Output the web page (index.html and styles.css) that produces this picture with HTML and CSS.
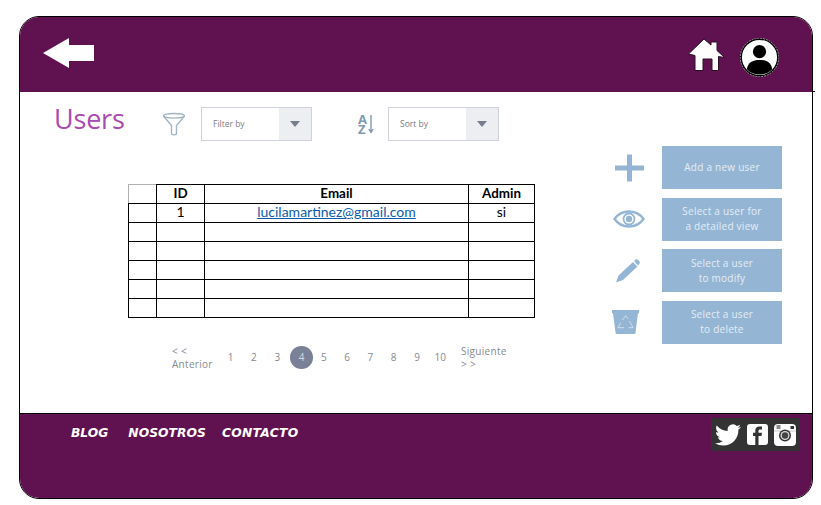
FILE: index.html
```html
<!DOCTYPE html>
<html lang="en">
<head>
    <meta charset="UTF-8">
    <meta name="viewport" content="width=device-width, initial-scale=1.0">
    <title>Users</title>
    <link rel="stylesheet" href="styles.css">
</head>
<body>
    <div class="frame">
        <header class="top-bar">
            <svg class="back-icon" viewBox="0 0 51 30"><path d="M0 15 26 0V7H51V23H26V30Z"/></svg>
            <div class="top-icons">
                <svg class="home-icon" viewBox="0 0 38 34">
                    <path d="M16 1 23 7V4H29V12.500L36.500 19.500 30.500 18.500V32.500H24V21H15V32.500H7V17.500L.5 16Z" fill="#fff" stroke="#2a1024" stroke-width="1"/>
                </svg>
                <svg class="user-icon" viewBox="0 0 40 40">
                    <circle cx="20" cy="20" r="19" fill="#fff" stroke="#000" stroke-width="2"/>
                    <circle cx="20" cy="20" r="19.700" fill="none" stroke="#fff" stroke-width=".6" stroke-dasharray="2 1"/>
                    <circle cx="20" cy="14" r="6.800"/>
                    <path d="M7 32C8 25 13 22.500 20 22.500S32 25 33 32C30 35.500 25 37.500 20 37.500S10 35.500 7 32Z"/>
                </svg>
            </div>
        </header>

        <main class="content">
            <div class="left-col">
                <div class="toolbar">
                    <h1 class="page-title">Users</h1>
                    <svg class="funnel-icon" viewBox="0 0 24 24" fill="none" stroke="#9fb4c4" stroke-width="1.300">
                        <ellipse cx="12" cy="3.800" rx="10.500" ry="2.300"/>
                        <path d="M1.500 4 9.500 13.500V21C9.500 23.500 14.500 23.500 14.500 21V13.500L22.500 4"/>
                    </svg>
                    <div class="select-box">
                        <span class="select-label">Filter by</span>
                        <span class="select-arrow"><i class="arrow-down"></i></span>
                    </div>
                    <div class="az-icon">
                        <span class="az-letters">A<br>Z</span>
                        <svg class="az-arrow" viewBox="0 0 6 20" fill="none" stroke="#7f9ab3" stroke-width="1.400">
                            <path d="M3 1V18M.8 15 3 18.500 5.200 15"/>
                        </svg>
                    </div>
                    <div class="select-box">
                        <span class="select-label">Sort by</span>
                        <span class="select-arrow"><i class="arrow-down"></i></span>
                    </div>
                </div>

                <table class="users-table">
                    <tr>
                        <th class="corner"></th>
                        <th class="col-id">ID</th>
                        <th class="col-email">Email</th>
                        <th class="col-admin">Admin</th>
                    </tr>
                    <tr>
                        <td></td>
                        <td>1</td>
                        <td><a href="#">lucilamartinez@gmail.com</a></td>
                        <td>si</td>
                    </tr>
                    <tr><td></td><td></td><td></td><td></td></tr>
                    <tr><td></td><td></td><td></td><td></td></tr>
                    <tr><td></td><td></td><td></td><td></td></tr>
                    <tr><td></td><td></td><td></td><td></td></tr>
                    <tr><td></td><td></td><td></td><td></td></tr>
                </table>

                <nav class="pager">
                    <span class="pager-edge">&lt; &lt;<br>Anterior</span>
                    <span class="pager-num">1</span>
                    <span class="pager-num">2</span>
                    <span class="pager-num">3</span>
                    <span class="pager-num active">4</span>
                    <span class="pager-num">5</span>
                    <span class="pager-num">6</span>
                    <span class="pager-num">7</span>
                    <span class="pager-num">8</span>
                    <span class="pager-num">9</span>
                    <span class="pager-num">10</span>
                    <span class="pager-edge next">Siguiente<br>&gt; &gt;</span>
                </nav>
            </div>

            <div class="actions">
                <div class="action-row">
                    <svg class="action-icon" viewBox="0 0 36 30"><path d="M16 1.500H21V12.500H33V17.500H21V28.500H16V17.500H4V12.500H16Z"/></svg>
                    <div class="action-btn">Add a new user</div>
                </div>
                <div class="action-row">
                    <svg class="action-icon" viewBox="0 0 36 30">
                        <path d="M3.500 15C7 10 12 7.500 18 7.500S29 10 32.500 15C29 20 24 22.500 18 22.500S7 20 3.500 15Z" fill="none" stroke="#94b6d4" stroke-width="2.400"/>
                        <circle cx="18" cy="15" r="5.500" fill="none" stroke="#94b6d4" stroke-width="1.800"/>
                        <circle cx="18" cy="15" r="3.200"/>
                    </svg>
                    <div class="action-btn">Select a user for<br>a detailed view</div>
                </div>
                <div class="action-row">
                    <svg class="action-icon" viewBox="0 0 36 30">
                        <path d="M5 26.500 7.500 19.500 22 6 26.500 10.500 12 24ZM23 5 24.500 3.500C25.500 3 26 3 27 3.800L28.500 5.500C29 6.500 29 7 28.300 8L27 9.500Z"/>
                    </svg>
                    <div class="action-btn">Select a user<br>to modify</div>
                </div>
                <div class="action-row">
                    <svg class="action-icon" viewBox="0 0 36 30">
                        <path d="M1 3H28V6L27 6.500 24.500 25.500C24.300 26.700 23.700 27 23 27H6C5.300 27 4.700 26.700 4.500 25.500L2 6.500 1 6Z"/>
                        <path d="M11.500 13 14.700 8.700 17 12M18.500 14 22 20.700H17.500M13 20.700H7L9.800 15.500" fill="none" stroke="#dbe7f1" stroke-width=".8"/>
                    </svg>
                    <div class="action-btn">Select a user<br>to delete</div>
                </div>
            </div>
        </main>

        <footer class="bottom-bar">
            <nav class="footer-links">
                <a href="#" class="link-blog">BLOG</a>
                <a href="#" class="link-us">NOSOTROS</a>
                <a href="#">CONTACTO</a>
            </nav>
            <div class="social">
                <svg class="bird" viewBox="0 0 24 24"><path d="M23.953 4.570a10 10 0 01-2.825.775 4.958 4.958 0 002.163-2.723c-.951.555-2.005.959-3.127 1.184a4.920 4.920 0 00-8.384 4.482C7.690 8.095 4.067 6.130 1.640 3.162a4.822 4.822 0 00-.666 2.475c0 1.710.870 3.213 2.188 4.096a4.904 4.904 0 01-2.228-.616v.060a4.923 4.923 0 003.946 4.827 4.996 4.996 0 01-2.212.085 4.936 4.936 0 004.604 3.417 9.867 9.867 0 01-6.102 2.105c-.390 0-.779-.023-1.170-.067a13.995 13.995 0 007.557 2.209c9.053 0 13.998-7.496 13.998-13.985 0-.210 0-.420-.015-.630A9.935 9.935 0 0024 4.590z"/></svg>
                <svg class="social-tile" viewBox="0 0 21 21">
                    <rect width="21" height="21" rx="3" fill="#fff"/>
                    <path d="M11.500 21V12H14.500L15 8.800H11.500V7C11.500 6 12 5.500 13 5.500H15V2.500H12.500C9.500 2.500 8.300 4.200 8.300 6.500V8.800H6V12H8.300V21Z" fill="#333"/>
                </svg>
                <svg class="social-tile insta" viewBox="0 0 22 22">
                    <rect width="22" height="22" rx="4" fill="#fff"/>
                    <rect x="2.500" y="1" width="4" height="4" fill="#8a8a8a"/>
                    <rect x="16.500" y="2" width="3.500" height="3" fill="#333"/>
                    <path d="M0 7H22" stroke="#ccc" stroke-width="1"/>
                    <circle cx="11" cy="11.500" r="6" fill="#333"/>
                    <circle cx="11" cy="11.500" r="4.500" fill="#ddd"/>
                    <circle cx="11" cy="11.500" r="3.200" fill="#444"/>
                </svg>
            </div>
        </footer>
    </div>
</body>
</html>
```

FILE: styles.css
```css
body {
    margin: 0;
    background-color: white;
    font-family: "Open Sans", sans-serif;
}
.frame {
    box-sizing: border-box;
    width: 794px;
    height: 483px;
    margin: 16px 0 0 19px;
    border: 1px solid black;
    border-radius: 20px;
    display: flex;
    flex-direction: column;
}

/* top bar */
.top-bar {
    position: relative;
    height: 75px;
    flex: none;
    background-color: #5f124f;
    border-radius: 19px 19px 0 0;
    display: flex;
    align-items: center;
    justify-content: space-between;
    padding: 0 33px 0 23px;
}
.top-bar::after {
    content: "";
    position: absolute;
    right: -3px;
    bottom: 0;
    width: 3px;
    height: 1px;
    background-color: black;
}
.back-icon {
    width: 51px;
    height: 30px;
    fill: white;
    margin-bottom: 4px;
}
.top-icons {
    display: flex;
    align-items: center;
    gap: 14px;
}
.home-icon {
    width: 38px;
    height: 34px;
}
.user-icon {
    width: 39px;
    height: 39px;
    margin-top: 6px;
}

/* middle */
.content {
    flex: 1;
    display: flex;
    justify-content: space-between;
    background-color: white;
}
.left-col {
    padding: 15px 0 0 34px;
}
.toolbar {
    display: flex;
    align-items: center;
    height: 34px;
}
.page-title {
    margin: 0 37px 11px 0;
    width: 71px;
    font-family: "Open Sans", sans-serif;
    font-size: 27px;
    font-weight: 400;
    letter-spacing: -.2px;
    color: #ab4ab3;
}
.funnel-icon {
    width: 24px;
    height: 24px;
    margin: 0 15px 0 0;
}
.select-box {
    box-sizing: border-box;
    width: 111px;
    height: 34px;
    border: 1px solid #cfd3d9;
    display: flex;
    align-items: stretch;
}
.select-label {
    flex: 1;
    padding-left: 11px;
    font-size: 8.500px;
    line-height: 32px;
    color: #777c84;
}
.select-arrow {
    width: 32px;
    background-color: #eceef2;
    display: flex;
    align-items: center;
    justify-content: center;
}
.arrow-down {
    border-left: 5.500px solid transparent;
    border-right: 5.500px solid transparent;
    border-top: 6px solid #767e8c;
}
.az-icon {
    display: flex;
    align-items: center;
    gap: 1px;
    width: 30px;
    margin-left: 46px;
}
.az-letters {
    font-size: 13px;
    font-weight: 700;
    line-height: 10px;
    color: #7f9ab3;
}
.az-arrow {
    width: 6px;
    height: 20px;
}

.users-table {
    margin: 43px 0 0 74px;
    border-collapse: collapse;
    table-layout: fixed;
    width: 407px;
    font-family: Lato, sans-serif;
    font-size: 14px;
    color: black;
}
.users-table th, .users-table td {
    box-sizing: border-box;
    height: 19px;
    padding: 0 0 2px;
    border: 1px solid black;
    text-align: center;
    line-height: 16px;
}
.users-table th {
    font-size: 13.400px;
}
.users-table .corner {
    width: 28px;
    border-top-color: #b0b0b0;
    border-left-color: #b0b0b0;
}
.col-id {
    width: 48px;
}
.col-email {
    width: 264px;
}
.users-table a {
    color: #0b5cad;
}

/* pagination */
.pager {
    margin: 28px 0 0 118px;
    display: flex;
    align-items: center;
    height: 24px;
    font-size: 10px;
    color: #858a92;
}
.pager-edge {
    line-height: 13px;
    letter-spacing: .3px;
    width: 47px;
}
.pager-edge.next {
    margin-left: 9px;
}
.pager-num {
    width: 23.300px;
    height: 23px;
    line-height: 23px;
    text-align: center;
    margin-bottom: 2px;
}
.pager-num.active {
    background-color: #7a8096;
    border-radius: 50%;
    color: #d5d8e0;
    margin-left: 1px;
    margin-right: -1px;
}

/* actions */
.actions {
    padding: 54px 30px 0 0;
    display: flex;
    flex-direction: column;
    gap: 8.670px;
}
.action-row {
    display: flex;
    align-items: center;
    gap: 15px;
}
.action-icon {
    width: 36px;
    height: 30px;
    fill: #94b6d4;
}
.action-btn {
    width: 120px;
    height: 43px;
    background-color: #94b6d4;
    color: #e4edf5;
    font-size: 10px;
    line-height: 15px;
    letter-spacing: .25px;
    text-align: center;
    display: flex;
    align-items: center;
    justify-content: center;
}

/* footer */
.bottom-bar {
    height: 85px;
    flex: none;
    box-sizing: border-box;
    border-top: 1px solid black;
    border-radius: 0 0 19px 19px;
    background-color: #5f124f;
    display: flex;
    justify-content: space-between;
    align-items: flex-start;
    padding: 4px 12px 0 51px;
}
.footer-links {
    display: flex;
    margin-top: 8px;
    font-family: "DejaVu Sans", sans-serif;
    font-size: 12.300px;
    font-weight: 700;
    font-style: italic;
}
.footer-links a {
    color: white;
    text-decoration: none;
}
.link-blog {
    margin-right: 20px;
}
.link-us {
    margin-right: 16px;
    letter-spacing: .05px;
}
.footer-links a:last-child {
    letter-spacing: .3px;
}
.social {
    width: 89px;
    height: 33px;
    background-color: #333;
    display: flex;
    align-items: center;
    justify-content: flex-end;
    gap: 6px;
    padding-right: 4px;
    box-sizing: border-box;
}
.bird {
    width: 26px;
    height: 26px;
    fill: white;
}
.social-tile {
    width: 21px;
    height: 21px;
}
.social-tile.insta {
    width: 22px;
    height: 22px;
}
```
